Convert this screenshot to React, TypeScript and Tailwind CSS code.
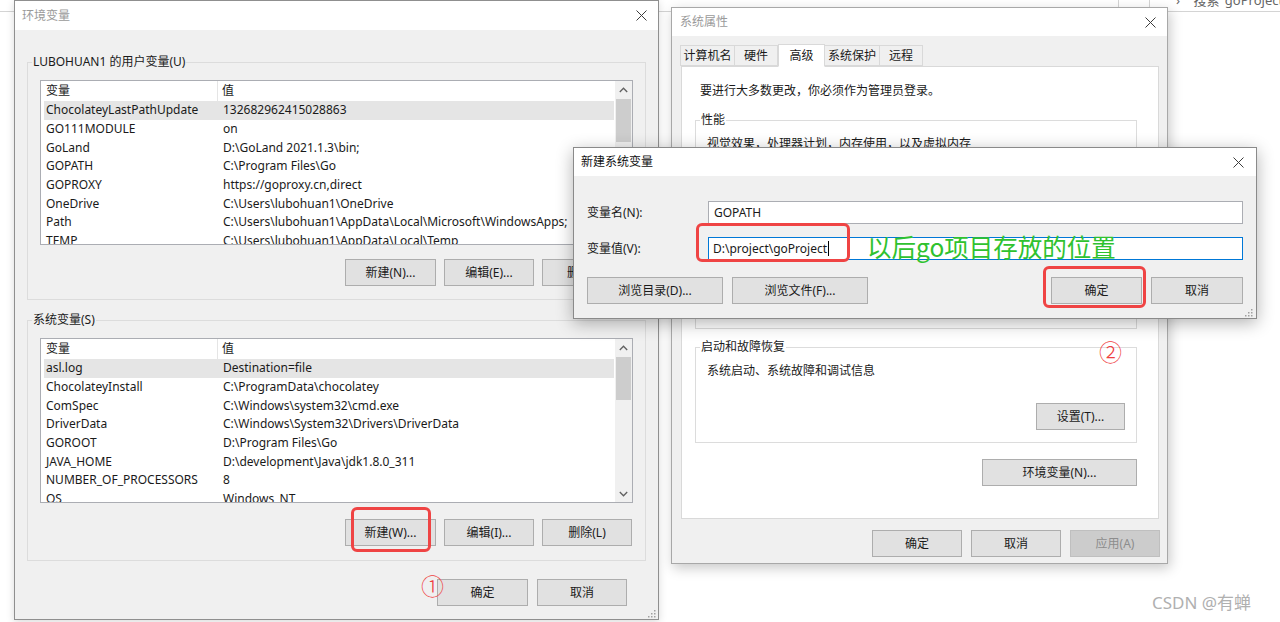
import React from "react";

const userVars: [string, string][] = [
  ["ChocolateyLastPathUpdate", "132682962415028863"],
  ["GO111MODULE", "on"],
  ["GoLand", "D:\\GoLand 2021.1.3\\bin;"],
  ["GOPATH", "C:\\Program Files\\Go"],
  ["GOPROXY", "https://goproxy.cn,direct"],
  ["OneDrive", "C:\\Users\\lubohuan1\\OneDrive"],
  ["Path", "C:\\Users\\lubohuan1\\AppData\\Local\\Microsoft\\WindowsApps;"],
  ["TEMP", "C:\\Users\\lubohuan1\\AppData\\Local\\Temp"],
];

const sysVars: [string, string][] = [
  ["asl.log", "Destination=file"],
  ["ChocolateyInstall", "C:\\ProgramData\\chocolatey"],
  ["ComSpec", "C:\\Windows\\system32\\cmd.exe"],
  ["DriverData", "C:\\Windows\\System32\\Drivers\\DriverData"],
  ["GOROOT", "D:\\Program Files\\Go"],
  ["JAVA_HOME", "D:\\development\\Java\\jdk1.8.0_311"],
  ["NUMBER_OF_PROCESSORS", "8"],
  ["OS", "Windows_NT"],
];

function CloseX() {
  return (
    <svg width="11" height="11" viewBox="0 0 11 11" className="shrink-0">
      <path d="M0.5 0.5 L10.5 10.5 M10.5 0.5 L0.5 10.5" stroke="#3c3c3c" strokeWidth="1" />
    </svg>
  );
}

function Grip() {
  return (
    <svg width="10" height="10" viewBox="0 0 10 10">
      <g fill="#a0a0a0">
        <rect x="8" y="2" width="1.5" height="1.5" />
        <rect x="5" y="5" width="1.5" height="1.5" />
        <rect x="8" y="5" width="1.5" height="1.5" />
        <rect x="2" y="8" width="1.5" height="1.5" />
        <rect x="5" y="8" width="1.5" height="1.5" />
        <rect x="8" y="8" width="1.5" height="1.5" />
      </g>
    </svg>
  );
}

function Chevron({ up }: { up?: boolean }) {
  return (
    <svg width="9" height="6" viewBox="0 0 9 6">
      <polyline
        points={up ? "0.8,5 4.5,1.2 8.2,5" : "0.8,1 4.5,4.8 8.2,1"}
        fill="none"
        stroke="#606060"
        strokeWidth="1.3"
      />
    </svg>
  );
}

function Btn({
  children,
  className = "",
  disabled,
}: {
  children: React.ReactNode;
  className?: string;
  disabled?: boolean;
}) {
  return (
    <div
      className={
        "h-[27px] shrink-0 flex items-center justify-center border text-[12px] " +
        (disabled
          ? "bg-[#cccccc] border-[#bfbfbf] text-[#8d8d8d] "
          : "bg-[#e1e1e1] border-[#adadad] text-[#1a1a1a] ") +
        className
      }
    >
      {children}
    </div>
  );
}

// fieldset + legend, the padding lives on the inner div so the legend stays put
function Group({
  label,
  children,
  className = "",
  inner = "",
}: {
  label: string;
  children?: React.ReactNode;
  className?: string;
  inner?: string;
}) {
  return (
    <fieldset className={"border border-[#dcdcdc] " + className}>
      <legend className="ml-[4px] px-[1px] text-[12px] leading-[16px] text-[#1a1a1a]">{label}</legend>
      <div className={inner}>{children}</div>
    </fieldset>
  );
}

function ListBox({ rows }: { rows: [string, string][] }) {
  return (
    <div className="h-[165px] border border-[#abadb3] bg-white flex text-[12px] text-[#1a1a1a]">
      <div className="flex-1 overflow-hidden pl-[3px] pr-[1px]">
        <div className="h-[20px] flex items-stretch">
          <div className="w-[174px] pl-[2px] flex items-center border-r border-[#e5e5e5]">变量</div>
          <div className="pl-[4px] flex items-center">值</div>
        </div>
        {rows.map((r, i) => (
          <div
            key={r[0]}
            className={
              "h-[18.7px] flex items-center whitespace-nowrap " + (i === 0 ? "bg-[#e5e5e5]" : "")
            }
          >
            <div className="w-[174px] pl-[2px] shrink-0">{r[0]}</div>
            <div className="pl-[5px]">{r[1]}</div>
          </div>
        ))}
      </div>
      <div className="w-[17px] bg-[#f0f0f0] flex flex-col">
        <div className="h-[17px] flex items-center justify-center">
          <Chevron up />
        </div>
        <div className="flex-1">
          <div className="mt-[1px] mx-[1px] h-[43px] bg-[#cdcdcd]" />
        </div>
        <div className="h-[17px] flex items-center justify-center">
          <Chevron />
        </div>
      </div>
    </div>
  );
}

function EnvWindow() {
  return (
    <div className="absolute left-[14px] top-0 w-[645px] h-[620px] flex flex-col border border-[#8f8f8f] bg-[#f0f0f0] shadow-[0_2px_8px_rgba(0,0,0,0.15)]">
      <div className="h-[29px] bg-white flex items-center justify-between pl-[7px] pr-[11px]">
        <span className="text-[12px] text-[#9a9a9a]">环境变量</span>
        <CloseX />
      </div>
      <div className="flex-1 flex flex-col px-[12px] pt-[24px]">
        <Group label="LUBOHUAN1 的用户变量(U)" inner="px-[12px] pb-[13px]">
          <div className="mt-[10px]">
            <ListBox rows={userVars} />
          </div>
          <div className="mt-[14px] flex justify-end gap-[8px] pr-[1px]">
            <Btn className="w-[91px]">新建(N)...</Btn>
            <Btn className="w-[90px]">编辑(E)...</Btn>
            <Btn className="w-[90px]">删除(D)</Btn>
          </div>
        </Group>
        <Group label="系统变量(S)" className="mt-[12px]" inner="px-[12px] pb-[14px]">
          <div className="mt-[10px]">
            <ListBox rows={sysVars} />
          </div>
          <div className="mt-[16px] flex justify-end gap-[8px] pr-[1px]">
            <Btn className="w-[91px]">新建(W)...</Btn>
            <Btn className="w-[90px]">编辑(I)...</Btn>
            <Btn className="w-[90px]">删除(L)</Btn>
          </div>
        </Group>
        <div className="mt-[18px] flex justify-end gap-[9px] pr-[19px]">
          <Btn className="w-[91px]">确定</Btn>
          <Btn className="w-[90px]">取消</Btn>
        </div>
        <div className="mt-auto mb-[1px] -mr-[10px] flex justify-end">
          <Grip />
        </div>
      </div>
    </div>
  );
}

function Tab({ label, w, active }: { label: string; w: string; active?: boolean }) {
  return (
    <div
      className={
        "flex items-center justify-center text-[12px] text-[#1a1a1a] border border-[#d9d9d9] " +
        w +
        (active
          ? " h-[23px] bg-white border-b-white -mb-[1px] relative z-10"
          : " h-[21px] bg-[#f0f0f0] -ml-[1px]")
      }
    >
      {label}
    </div>
  );
}

function SysPropsWindow() {
  return (
    <div className="absolute left-[671px] top-[7px] w-[497px] h-[557px] flex flex-col border border-[#a8a8a8] bg-[#f0f0f0] shadow-[2px_4px_12px_rgba(0,0,0,0.22)]">
      <div className="h-[28px] bg-white flex items-center justify-between pl-[8px] pr-[11px]">
        <span className="text-[12px] text-[#9a9a9a]">系统属性</span>
        <CloseX />
      </div>
      <div className="flex-1 flex flex-col pl-[9px] pr-[8px] pt-[8px]">
        <div className="flex items-end">
          <Tab label="计算机名" w="w-[55px]" />
          <Tab label="硬件" w="w-[44px]" />
          <Tab label="高级" w="w-[47px]" active />
          <Tab label="系统保护" w="w-[56px]" />
          <Tab label="远程" w="w-[44px]" />
        </div>
        <div className="h-[453px] bg-white border border-[#d9d9d9] pl-[13px] pr-[21px] pt-[16px] flex flex-col text-[12px] text-[#1a1a1a]">
          <div className="ml-[5px] leading-[16px]">要进行大多数更改，你必须作为管理员登录。</div>
          <Group label="性能" className="mt-[13px] h-[103px]" inner="px-[11px]">
            <div className="mt-[8px] leading-[16px]">视觉效果，处理器计划，内存使用，以及虚拟内存</div>
            <div className="mt-[24px] flex justify-end">
              <Btn className="w-[89px]">设置(S)...</Btn>
            </div>
          </Group>
          <Group label="用户配置文件" className="mt-[10px] h-[104px]" inner="px-[11px]">
            <div className="mt-[8px] leading-[16px]">与登录帐户相关的桌面设置</div>
            <div className="mt-[24px] flex justify-end">
              <Btn className="w-[89px]">设置(E)...</Btn>
            </div>
          </Group>
          <Group label="启动和故障恢复" className="mt-[10px] h-[104px]" inner="px-[11px]">
            <div className="mt-[8px] leading-[16px]">系统启动、系统故障和调试信息</div>
            <div className="mt-[24px] flex justify-end">
              <Btn className="w-[89px]">设置(T)...</Btn>
            </div>
          </Group>
          <div className="mt-[16px] flex justify-end">
            <Btn className="w-[155px]">环境变量(N)...</Btn>
          </div>
        </div>
        <div className="mt-[11px] flex justify-end gap-[9px] -mr-[1px]">
          <Btn className="w-[90px]">确定</Btn>
          <Btn className="w-[90px]">取消</Btn>
          <Btn className="w-[90px]" disabled>
            应用(A)
          </Btn>
        </div>
      </div>
    </div>
  );
}

function NewVarDialog() {
  return (
    <div className="absolute left-[573px] top-[147px] w-[684px] h-[172px] flex flex-col border border-[#8a8a8a] bg-[#f0f0f0] shadow-[0_4px_16px_rgba(0,0,0,0.3)] z-20">
      <div className="h-[28px] bg-white flex items-center justify-between pl-[7px] pr-[12px]">
        <span className="text-[12px] text-[#111]">新建系统变量</span>
        <CloseX />
      </div>
      <div className="flex-1 flex flex-col px-[13px] pt-[25px] text-[12px] text-[#1a1a1a]">
        <div className="flex items-center">
          <div className="w-[121px]">变量名(N):</div>
          <div className="flex-1 h-[23px] bg-white border border-[#abadb3] flex items-center pl-[5px]">
            GOPATH
          </div>
        </div>
        <div className="mt-[13px] flex items-center">
          <div className="w-[121px]">变量值(V):</div>
          <div className="flex-1 h-[23px] bg-white border border-[#0078d7] flex items-center pl-[4px]">
            <span>D:\project\goProject</span>
            <span className="ml-[1px] w-[1px] h-[15px] bg-black" />
          </div>
        </div>
        <div className="mt-[17px] flex items-center">
          <Btn className="w-[136px]">浏览目录(D)...</Btn>
          <Btn className="ml-[9px] w-[136px]">浏览文件(F)...</Btn>
          <div className="flex-1" />
          <Btn className="w-[91px]">确定</Btn>
          <Btn className="ml-[9px] w-[92px]">取消</Btn>
        </div>
        <div className="mt-auto mb-[1px] -mr-[10px] flex justify-end">
          <Grip />
        </div>
      </div>
    </div>
  );
}

export default function App() {
  return (
    <div className="relative w-[1280px] h-[622px] overflow-hidden bg-white font-[family-name:'Noto_Sans','Noto_Sans_CJK_SC',sans-serif]">
      {/* desktop strip behind the windows */}
      <div className="absolute left-0 right-0 top-[11px] h-[1px] bg-[#d4d4d4]" />
      <div className="absolute left-[1118px] top-0 w-[1px] h-[11px] bg-[#d4d4d4]" />
      <div className="absolute left-[1149px] top-0 w-[1px] h-[11px] bg-[#d4d4d4]" />
      <div className="absolute left-[1176px] top-[-9px] text-[13px] text-[#666] whitespace-nowrap">
        ›&nbsp;&nbsp;&nbsp;&nbsp;搜索&quot;goProject&quot;
      </div>

      <EnvWindow />
      <SysPropsWindow />
      <NewVarDialog />

      {/* annotations */}
      <div className="absolute left-[351px] top-[507px] w-[80px] h-[45px] border-[3px] border-[#ef4444] rounded-[6px] z-30" />
      <div className="absolute left-[421px] top-[571px] text-[23px] leading-[28px] text-[#ef4040] font-[family-name:'Noto_Sans_CJK_SC',sans-serif] font-light z-30">
        ①
      </div>
      <div className="absolute left-[1099px] top-[337px] text-[23px] leading-[28px] text-[#ef4040] font-[family-name:'Noto_Sans_CJK_SC',sans-serif] font-light z-30">
        ②
      </div>
      <div className="absolute left-[696px] top-[223px] w-[154px] h-[39px] border-[3px] border-[#ef4444] rounded-[6px] z-30" />
      <div className="absolute left-[1043px] top-[266px] w-[103px] h-[42px] border-[3px] border-[#ef4444] rounded-[6px] z-30" />
      <div className="absolute left-[867px] top-[232px] text-[24.5px] leading-[30px] text-[#2fc22f] whitespace-nowrap z-30 font-[family-name:'Noto_Sans_CJK_SC',sans-serif]">
        以后go项目存放的位置
      </div>

      <div className="absolute left-[1152px] top-[591px] text-[17px] leading-[24px] text-[#b0b0b0] whitespace-nowrap">
        CSDN @有蝉
      </div>
    </div>
  );
}
